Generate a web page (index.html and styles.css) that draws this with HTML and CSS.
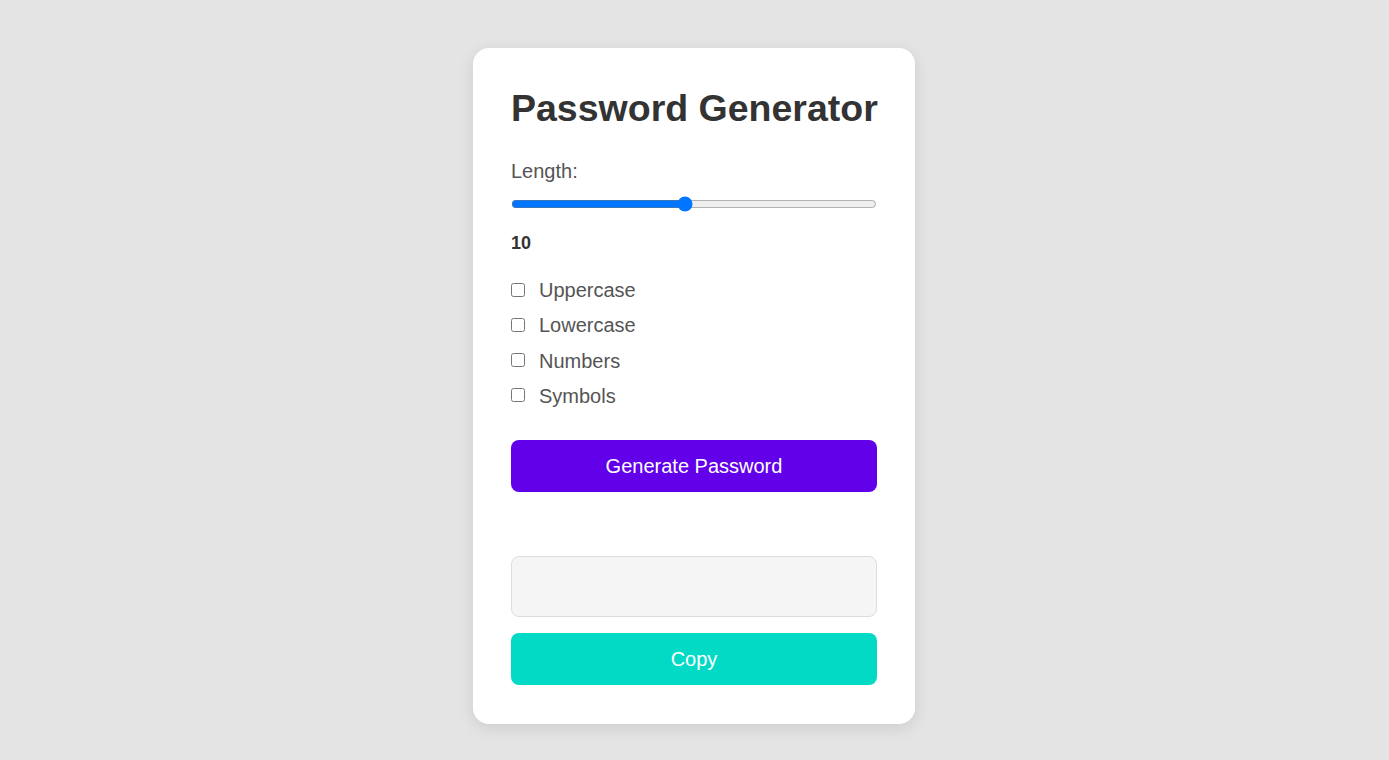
FILE: index.html
```html
<!DOCTYPE html>
<html lang="en">
<head>
<meta charset="utf-8">
<title>Password Generator</title>
<link rel="stylesheet" href="styles.css">
</head>
<body>
<main class="card">
  <h1 class="title">Password Generator</h1>
  <label class="length-label" for="length">Length:</label>
  <input class="slider" type="range" id="length" min="1" max="20" value="10">
  <div class="length-value">10</div>
  <div class="options">
    <label class="option"><input type="checkbox" class="check"><span>Uppercase</span></label>
    <label class="option"><input type="checkbox" class="check"><span>Lowercase</span></label>
    <label class="option"><input type="checkbox" class="check"><span>Numbers</span></label>
    <label class="option"><input type="checkbox" class="check"><span>Symbols</span></label>
  </div>
  <button class="btn btn-generate" type="button">Generate Password</button>
  <div class="output"></div>
  <button class="btn btn-copy" type="button">Copy</button>
</main>
</body>
</html>
```

FILE: styles.css
```css
* {
  box-sizing: border-box;
}

html, body {
  margin: 0;
  padding: 0;
}

body {
  background: #e4e4e4;
  font-family: "Liberation Sans", Arial, sans-serif;
  display: flex;
  justify-content: center;
  padding-top: 48px;
  padding-right: 1px;
  min-height: 760px;
}

.card {
  width: 442px;
  background: #ffffff;
  border-radius: 16px;
  padding: 39px 38px 39px;
  box-shadow: 0 4px 16px rgba(0, 0, 0, 0.1);
  display: flex;
  flex-direction: column;
  align-self: flex-start;
}

.title {
  margin: 0;
  font-size: 37.5px;
  line-height: 43px;
  font-weight: 700;
  color: #333333;
  white-space: nowrap;
}

.length-label {
  margin-top: 30px;
  font-size: 20px;
  line-height: 23px;
  color: #555555;
}

.slider {
  width: 100%;
  margin: 13px 0 2px;
  height: 16px;
}

.length-value {
  margin-top: 19px;
  font-size: 18px;
  line-height: 21px;
  font-weight: 700;
  color: #333333;
}

.options {
  margin-top: 25px;
  display: flex;
  flex-direction: column;
  gap: 12.3px;
}

.option {
  display: flex;
  align-items: center;
  font-size: 20px;
  line-height: 23px;
  color: #555555;
}

.check {
  width: 14px;
  height: 14px;
  margin: 0 14px 2px 0;
}

.btn {
  width: 100%;
  height: 52px;
  border: none;
  border-radius: 8px;
  color: #ffffff;
  font-family: "Liberation Sans", Arial, sans-serif;
  font-size: 20px;
  cursor: pointer;
}

.btn-generate {
  margin-top: 32.5px;
  background: #6200ea;
}

.output {
  margin-top: 64px;
  height: 61px;
  background: #f5f5f5;
  border: 1px solid #dddddd;
  border-radius: 8px;
}

.btn-copy {
  margin-top: 16px;
  background: #03dac6;
}
```
